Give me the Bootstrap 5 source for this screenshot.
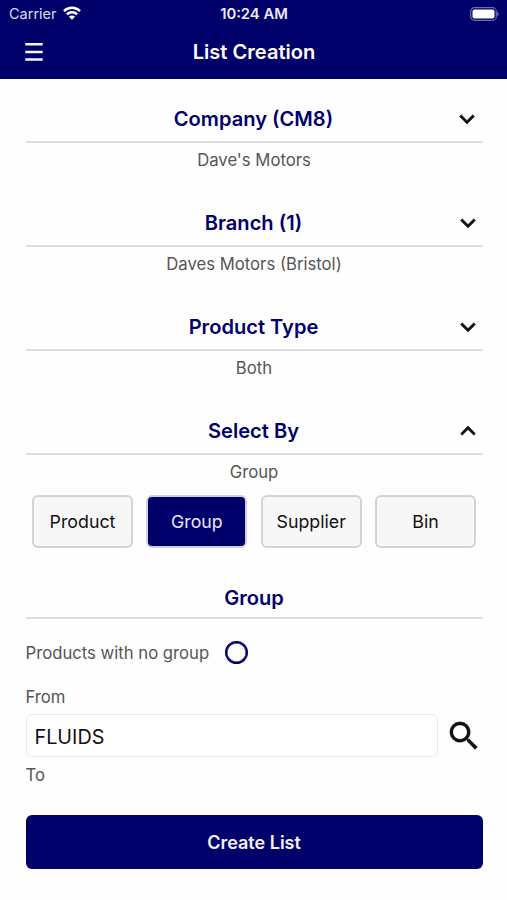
<!DOCTYPE html>
<html lang="en">
<head>
<meta charset="utf-8">
<meta name="viewport" content="width=device-width, initial-scale=1">
<title>List Creation</title>
<link href="https://cdn.jsdelivr.net/npm/bootstrap@5.3.0/dist/css/bootstrap.min.css" rel="stylesheet">
<style>
:root { --navy: #00006b; }
body { font-family: Inter, "Liberation Sans", sans-serif; color: #555; background: #fefefe; font-size: 16.7px; line-height: 24px; overflow: hidden; }
svg { display: block; flex: none; }
.app-header { background: var(--navy); height: 79px; color: #fff; }
.status-bar { height: 27px; font-size: 14.5px; line-height: 27px; padding: 0 8px 0 9px; }
.status-bar > * { flex: 1 1 0; }
.carrier { color: #dcdcf2; }
.carrier svg { margin: -1px 0 0 6px; }
.clock { font-weight: 600; color: #ececfa; font-size: 14.8px; padding-top: 1px; }
.title-bar { height: 50px; padding: 0 25px; }
.title-bar h1 { font-size: 20.1px; font-weight: 600; line-height: 50px; padding-left: 1px; }
.side { width: 18px; }
.app-main { padding: 18px 24.5px 0 25.5px; }
.section-block { height: 103.9px; }
.section-head { height: 46px; border-bottom: 2px solid #dfdfdf; }
.section-head h2 { font-size: 20.1px; font-weight: 600; color: var(--navy); line-height: 24px; }
.head-side { width: 29px; }
.section-value { padding-top: 5px; }
.choices { gap: 13.3px; padding: 0 6.5px; margin-top: -18px; }
.choice { height: 53px; font-size: 17.8px; border: 2px solid #d3d3d6; border-radius: 6px; background: #f7f7f7; color: #111; padding: 1px 0 0; line-height: 24px; }
.choice.active-choice { background: var(--navy); color: #e8e8ff; border-color: #d0d0e0; }
.group-head { margin-top: 31px; height: 40px; }
.ring { appearance: none; width: 23px; height: 23px; border: 2.5px solid var(--navy); border-radius: 50%; margin: 0; background: #fff; box-shadow: inset 0 0 0 .5px var(--navy); }
.no-group { gap: 15.5px; margin-top: 22px; }
.from-label { margin-top: 20px; }
.range-row { gap: 6.5px; margin-top: 5.5px; }
.range-input { height: 43px; width: 413.5px; border: 1px solid #ebebeb; border-radius: 6px; font-size: 19.8px; color: #111; padding: 2px 8px 0; }
.range-row svg { margin-top: 1px; }
.to-label { margin-top: 6px; }
.submit { height: 54px; background: var(--navy); color: #f2f2ff; font-size: 18px; font-weight: 600; border-radius: 6px; border: 0; margin-top: 28px; padding-top: 7px; }
</style>
<script src="https://cdn.jsdelivr.net/npm/bootstrap@5.3.0/dist/js/bootstrap.bundle.min.js"></script>
</head>
<body>
<header class="app-header">
  <div class="status-bar d-flex align-items-center">
    <div class="d-flex align-items-center carrier"><span>Carrier</span>
      <svg width="18" height="14" viewBox="0 0 18 14" fill="none" stroke="#fff" stroke-width="2.5"><path d="M1 5.1a11.4 11.4 0 0 1 16 0M3.9 8.4a7.2 7.2 0 0 1 10.2 0"/><path d="M9 13.8 5.9 10.7a4.3 4.3 0 0 1 6.2 0z" fill="#fff" stroke="none"/></svg>
    </div>
    <div class="clock text-center">10:24 AM</div>
    <div class="d-flex justify-content-end">
      <svg width="29" height="14" viewBox="0 0 29 14"><rect x=".7" y=".7" width="25.6" height="12.6" rx="3.8" fill="none" stroke="#6e6eae" stroke-width="1.2"/><rect x="2.5" y="2.5" width="22" height="9" rx="2" fill="#fff"/><path d="M27.4 4.8c1.7.8 1.7 3.6 0 4.4z" fill="#7c7cb8"/></svg>
    </div>
  </div>
  <div class="title-bar d-flex align-items-center justify-content-between">
    <svg class="side" width="18" height="20" viewBox="0 0 18 20" stroke="#f4f4ff" stroke-width="2.4"><path d="M.3 2.3h17.4M.3 10h17.4M.3 17.5h17.4"/></svg>
    <h1 class="m-0">List Creation</h1>
    <div class="side"></div>
  </div>
</header>
<main class="app-main">
  <section class="section-block">
    <div class="section-head d-flex align-items-center justify-content-between"><span class="head-side"></span><h2 class="m-0">Company (CM8)</h2><svg width="30" height="30" viewBox="0 0 24 24" fill="#111" stroke="#111" stroke-width=".4"><path d="M16.59 8.59 12 13.17 7.41 8.59 6 10l6 6 6-6z"/></svg></div>
    <div class="section-value text-center">Dave's Motors</div>
  </section>
  <section class="section-block">
    <div class="section-head d-flex align-items-center justify-content-between"><span class="head-side"></span><h2 class="m-0">Branch (1)</h2><svg width="30" height="30" viewBox="0 0 24 24" fill="#111" stroke="#111" stroke-width=".4"><path d="M16.59 8.59 12 13.17 7.41 8.59 6 10l6 6 6-6z"/></svg></div>
    <div class="section-value text-center">Daves Motors (Bristol)</div>
  </section>
  <section class="section-block">
    <div class="section-head d-flex align-items-center justify-content-between"><span class="head-side"></span><h2 class="m-0">Product Type</h2><svg width="30" height="30" viewBox="0 0 24 24" fill="#111" stroke="#111" stroke-width=".4"><path d="M16.59 8.59 12 13.17 7.41 8.59 6 10l6 6 6-6z"/></svg></div>
    <div class="section-value text-center">Both</div>
  </section>
  <section>
    <div class="section-block">
      <div class="section-head d-flex align-items-center justify-content-between"><span class="head-side"></span><h2 class="m-0">Select By</h2><svg width="30" height="30" viewBox="0 0 24 24" fill="#111" stroke="#111" stroke-width=".4"><path d="m12 8-6 6 1.41 1.41L12 10.83l4.59 4.58L18 14z"/></svg></div>
      <div class="section-value text-center">Group</div>
    </div>
    <div class="choices d-flex">
      <button type="button" class="btn choice flex-fill w-100">Product</button>
      <button type="button" class="btn choice active-choice flex-fill w-100">Group</button>
      <button type="button" class="btn choice flex-fill w-100">Supplier</button>
      <button type="button" class="btn choice flex-fill w-100">Bin</button>
    </div>
  </section>
  <section>
    <div class="section-head group-head d-flex align-items-center justify-content-center"><h2 class="m-0">Group</h2></div>
    <div class="no-group d-flex align-items-center">
      <label for="noGroup">Products with no group</label>
      <input type="radio" id="noGroup" class="ring">
    </div>
    <label class="from-label d-block" for="from">From</label>
    <div class="range-row d-flex align-items-center">
      <input id="from" class="form-control range-input" value="FLUIDS">
      <svg width="38" height="38" viewBox="0 0 24 24" fill="#111" stroke="#111" stroke-width=".2"><path d="M15.5 14h-.79l-.28-.27A6.47 6.47 0 0 0 16 9.5 6.5 6.5 0 1 0 9.5 16c1.61 0 3.09-.59 4.23-1.57l.27.28v.79l5 4.99L20.49 19zm-6 0C7.01 14 5 11.99 5 9.5S7.01 5 9.5 5 14 7.01 14 9.5 11.99 14 9.5 14"/></svg>
    </div>
    <div class="to-label">To</div>
    <button type="button" class="btn submit w-100">Create List</button>
  </section>
</main>
</body>
</html>
